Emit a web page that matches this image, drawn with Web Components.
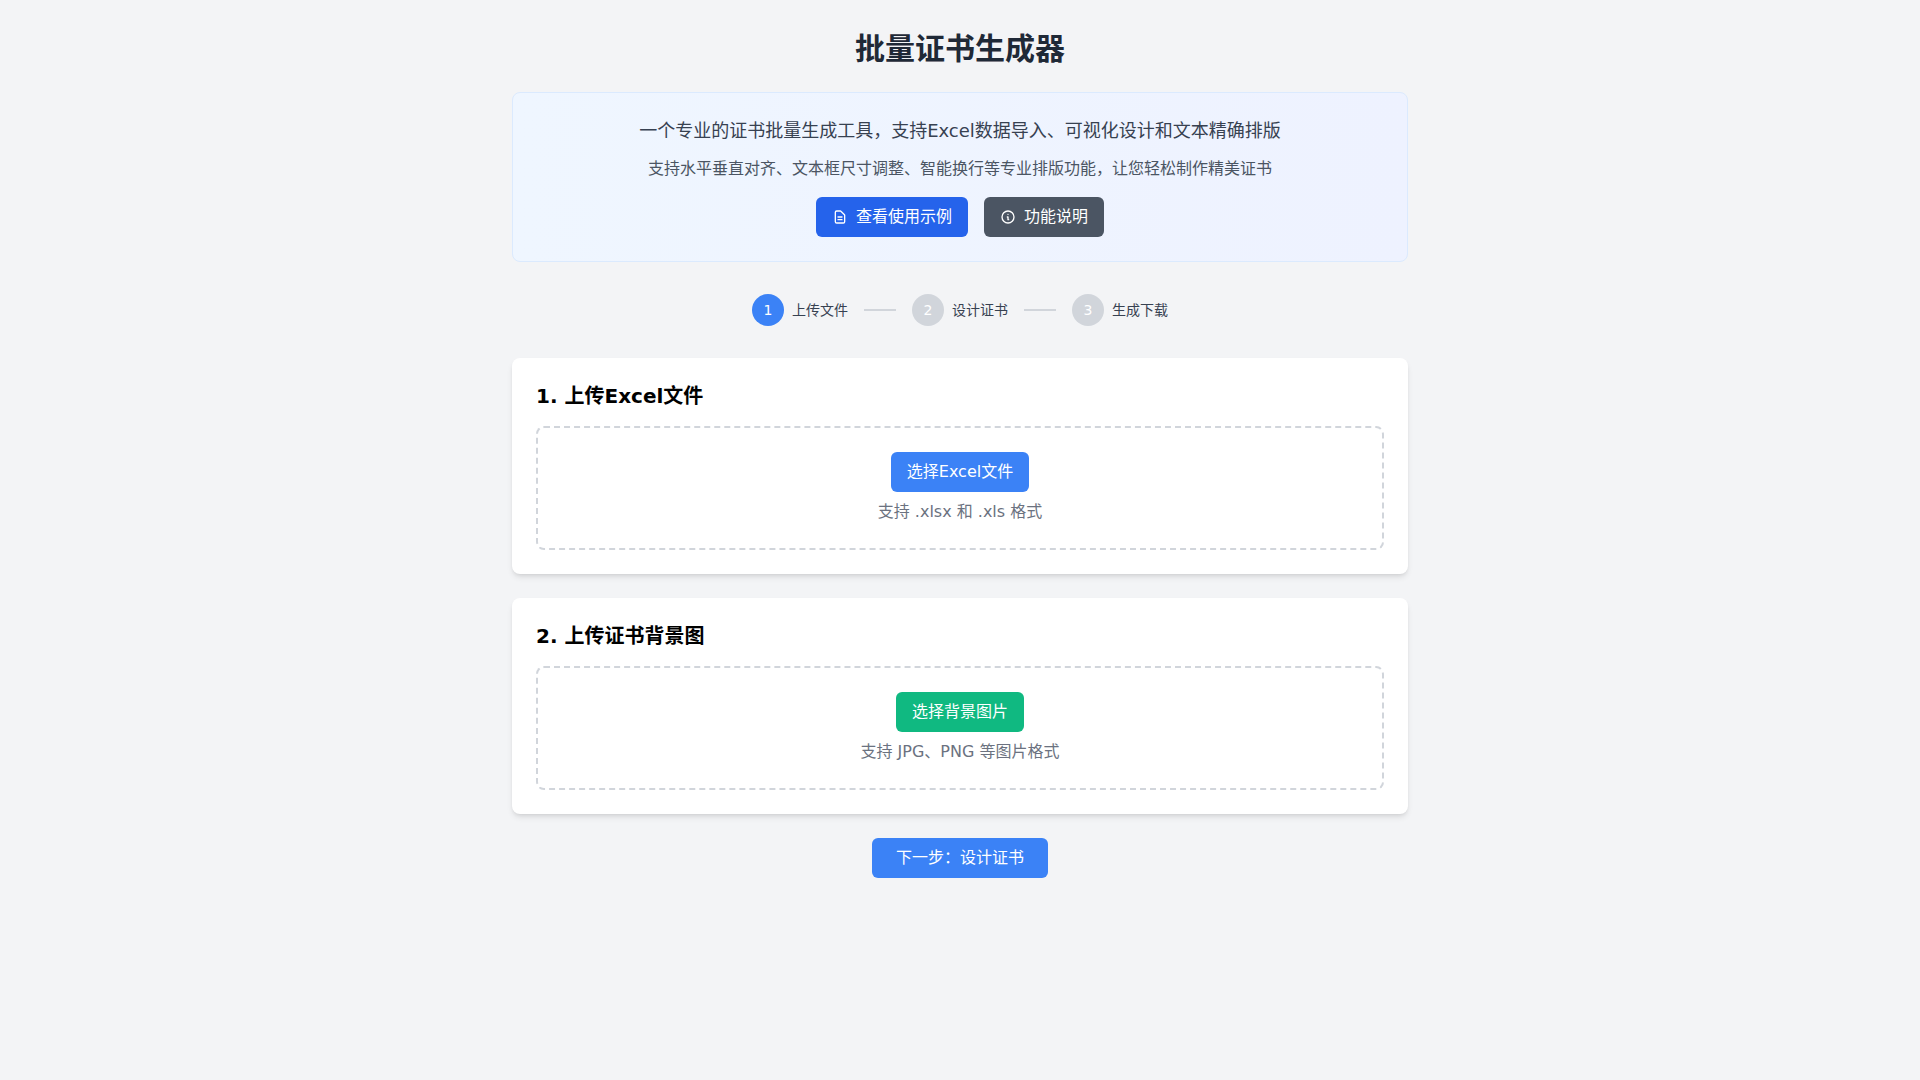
<!DOCTYPE html>
<html lang="zh-CN">
<head>
<meta charset="utf-8">
<title>批量证书生成器</title>
<style>
html,body{margin:0;padding:0;min-height:100%;background:#f3f4f6}
body{font-family:"DejaVu Sans","Noto Sans CJK SC",sans-serif;font-size:16px;line-height:24px;min-height:1080px}
</style>
</head>
<body>
<cert-app>
  <cert-intro>
    <span slot="lead">一个专业的证书批量生成工具，支持Excel数据导入、可视化设计和文本精确排版</span>
    <span slot="sub">支持水平垂直对齐、文本框尺寸调整、智能换行等专业排版功能，让您轻松制作精美证书</span>
    <ui-button color="#2563eb" icon="doc" pad="16">查看使用示例</ui-button>
    <ui-button color="#4b5563" icon="info" pad="16">功能说明</ui-button>
  </cert-intro>
  <step-bar>
    <step-item num="1" active>上传文件</step-item>
    <step-item num="2">设计证书</step-item>
    <step-item num="3">生成下载</step-item>
  </step-bar>
  <upload-card heading="1. 上传Excel文件" hint="支持 .xlsx 和 .xls 格式">
    <ui-button color="#3b82f6" pad="16">选择Excel文件</ui-button>
  </upload-card>
  <upload-card heading="2. 上传证书背景图" hint="支持 JPG、PNG 等图片格式">
    <ui-button color="#10b981" pad="16">选择背景图片</ui-button>
  </upload-card>
  <ui-button slot="next" color="#3b82f6" pad="24">下一步：设计证书</ui-button>
</cert-app>
<script>
function shadow(el, html){ el.attachShadow({mode:'open'}).innerHTML = html; }

customElements.define('cert-app', class extends HTMLElement{
  constructor(){super();shadow(this,`<style>
    :host{display:block;box-sizing:border-box;max-width:896px;margin:0 auto;padding:31px 0 32px;color:#000}
    h1{margin:0 0 25px;font-size:30px;line-height:36px;font-weight:700;color:#1f2937;text-align:center}
    .next{display:flex;justify-content:center}
  </style>
  <h1>批量证书生成器</h1>
  <slot></slot>
  <div class="next"><slot name="next"></slot></div>`);}
});

customElements.define('cert-intro', class extends HTMLElement{
  constructor(){super();shadow(this,`<style>
    :host{display:block;box-sizing:border-box;margin-bottom:32px;padding:24px;border:1px solid #dbeafe;border-radius:8px;
      background:linear-gradient(to right,#eff6ff,#eef2ff);text-align:center}
    .lead{margin:0 0 12px;font-size:18px;line-height:28px;color:#374151}
    .sub{margin:0 0 16px;font-size:16px;line-height:24px;color:#4b5563}
    .actions{display:flex;justify-content:center;gap:16px}
  </style>
  <p class="lead"><slot name="lead"></slot></p>
  <p class="sub"><slot name="sub"></slot></p>
  <div class="actions"><slot></slot></div>`);}
});

const ICONS={
  doc:'M9 12h6m-6 4h6m2 5H7a2 2 0 01-2-2V5a2 2 0 012-2h5.586a1 1 0 01.707.293l5.414 5.414a1 1 0 01.293.707V19a2 2 0 01-2 2z',
  info:'M13 16h-1v-4h-1m1-4h.01M21 12a9 9 0 11-18 0 9 9 0 0118 0z'
};
customElements.define('ui-button', class extends HTMLElement{
  constructor(){super();
    const icon=this.getAttribute('icon');
    const svg=icon?`<svg width="16" height="16" viewBox="0 0 24 24" fill="none" stroke="currentColor" stroke-width="2" stroke-linecap="round" stroke-linejoin="round"><path d="${ICONS[icon]}"/></svg>`:'';
    shadow(this,`<style>
      :host{display:inline-flex;align-items:center;gap:8px;box-sizing:border-box;height:40px;padding:0 ${this.getAttribute('pad')||16}px;
        border-radius:6px;background:${this.getAttribute('color')};color:#fff;font-size:16px;line-height:24px;cursor:pointer;white-space:nowrap}
      svg{display:block;flex:none}
    </style>${svg}<slot></slot>`);}
});

customElements.define('step-bar', class extends HTMLElement{
  constructor(){super();shadow(this,`<style>
    :host{display:flex;justify-content:center;margin-bottom:32px}
  </style><slot></slot>`);}
});

customElements.define('step-item', class extends HTMLElement{
  constructor(){super();
    const active=this.hasAttribute('active');
    shadow(this,`<style>
      :host{display:flex;align-items:center}
      .num{width:32px;height:32px;border-radius:50%;display:flex;align-items:center;justify-content:center;
        background:${active?'#3b82f6':'#d1d5db'};color:#fff;font-size:14px;line-height:20px}
      .label{margin-left:8px;font-size:14px;line-height:20px;color:#374151}
      .line{width:32px;height:2px;margin:0 16px;background:#d1d5db}
      :host(:last-child) .line{display:none}
    </style><div class="num">${this.getAttribute('num')}</div><div class="label"><slot></slot></div><div class="line"></div>`);}
});

customElements.define('upload-card', class extends HTMLElement{
  constructor(){super();shadow(this,`<style>
    :host{display:block;box-sizing:border-box;margin-bottom:24px;padding:24px;background:#fff;border-radius:8px;
      box-shadow:0 4px 6px -1px rgba(0,0,0,.1),0 2px 4px -2px rgba(0,0,0,.1)}
    h2{margin:0 0 16px;font-size:20px;line-height:28px;font-weight:700;color:#000}
    .drop{box-sizing:border-box;padding:24px;border:2px dashed #d1d5db;border-radius:8px;text-align:center}
    .btn{display:flex;justify-content:center}
    p{margin:8px 0 0;font-size:16px;line-height:24px;color:#6b7280}
  </style>
  <h2>${this.getAttribute('heading')}</h2>
  <div class="drop"><div class="btn"><slot></slot></div><p>${this.getAttribute('hint')}</p></div>`);}
});
</script>
</body>
</html>
